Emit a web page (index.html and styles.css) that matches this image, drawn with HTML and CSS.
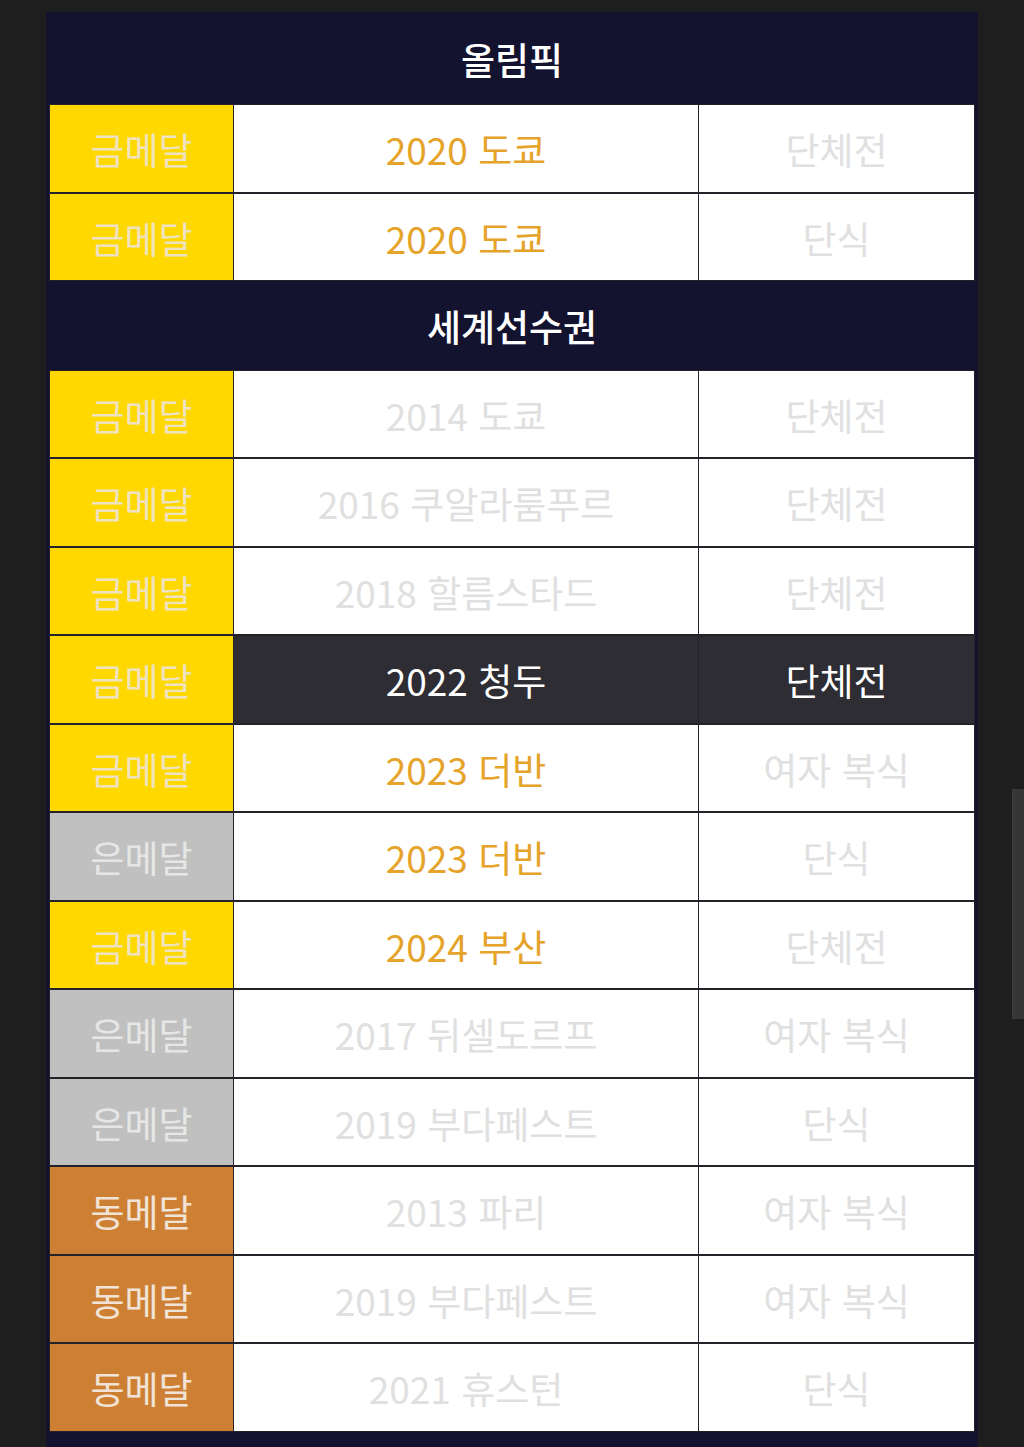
FILE: index.html
```html
<!DOCTYPE html>
<html lang="ko">
<head>
<meta charset="utf-8">
<title>메달 기록</title>
<link rel="stylesheet" href="styles.css">
</head>
<body>
<div class="board">
  <div class="head head-first">올림픽</div>
  <div class="row"><div class="cell gold">금메달</div><div class="cell orange">2020 도쿄</div><div class="cell faint">단체전</div></div>
  <div class="row"><div class="cell gold">금메달</div><div class="cell orange">2020 도쿄</div><div class="cell faint">단식</div></div>
  <div class="head">세계선수권</div>
  <div class="row"><div class="cell gold">금메달</div><div class="cell faint">2014 도쿄</div><div class="cell faint">단체전</div></div>
  <div class="row"><div class="cell gold">금메달</div><div class="cell faint">2016 쿠알라룸푸르</div><div class="cell faint">단체전</div></div>
  <div class="row"><div class="cell gold">금메달</div><div class="cell faint">2018 할름스타드</div><div class="cell faint">단체전</div></div>
  <div class="row"><div class="cell gold">금메달</div><div class="cell dark">2022 청두</div><div class="cell dark">단체전</div></div>
  <div class="row"><div class="cell gold">금메달</div><div class="cell orange">2023 더반</div><div class="cell faint">여자 복식</div></div>
  <div class="row"><div class="cell silver">은메달</div><div class="cell orange">2023 더반</div><div class="cell faint">단식</div></div>
  <div class="row"><div class="cell gold">금메달</div><div class="cell orange">2024 부산</div><div class="cell faint">단체전</div></div>
  <div class="row"><div class="cell silver">은메달</div><div class="cell faint">2017 뒤셀도르프</div><div class="cell faint">여자 복식</div></div>
  <div class="row"><div class="cell silver">은메달</div><div class="cell faint">2019 부다페스트</div><div class="cell faint">단식</div></div>
  <div class="row"><div class="cell bronze">동메달</div><div class="cell faint">2013 파리</div><div class="cell faint">여자 복식</div></div>
  <div class="row"><div class="cell bronze">동메달</div><div class="cell faint">2019 부다페스트</div><div class="cell faint">여자 복식</div></div>
  <div class="row"><div class="cell bronze">동메달</div><div class="cell faint">2021 휴스턴</div><div class="cell faint">단식</div></div>
</div>
<div class="scrollbar"></div>
</body>
</html>
```

FILE: styles.css
```css
html, body {
  margin: 0;
  padding: 0;
  background: #1e1e1f;
  height: 1447px;
  overflow: hidden;
}

body {
  font-family: "Noto Sans CJK KR", "Noto Sans", sans-serif;
  padding: 12px 0 0 46px;
  box-sizing: border-box;
}

.board {
  width: 932px;
  min-height: 1440px;
  box-sizing: border-box;
  background: #14132f;
  padding: 0 3px 0 3px;
}

.head {
  height: 88.5px;
  display: flex;
  align-items: center;
  justify-content: center;
  color: #ffffff;
  font-size: 37px;
  font-weight: 500;
  padding-top: 2px;
  box-sizing: border-box;
}

.head-first {
  height: 92px;
}

.row {
  height: 88.5px;
  box-sizing: border-box;
  display: grid;
  grid-template-columns: 183px 464px 1fr;
  column-gap: 1px;
  padding: 1px;
  background: #222228;
}

.cell {
  display: flex;
  align-items: center;
  justify-content: center;
  font-size: 37px;
  padding-top: 2px;
  background: #ffffff;
  color: #e2e2e2;
}

.gold {
  background: #ffd800;
  color: #efe3bf;
}

.silver {
  background: #c0c0c0;
  color: #e6e6e6;
}

.bronze {
  background: #cd8034;
  color: #f1e4d6;
}

.orange {
  color: #e6a32a;
}

.faint {
  color: #e0e0e0;
}

.dark {
  background: #2d2d33;
  color: #ffffff;
}

.scrollbar {
  position: absolute;
  right: 0;
  top: 789px;
  width: 11px;
  height: 230px;
  background: #363636;
  border-left: 1px solid #3e3e3e;
}
```
